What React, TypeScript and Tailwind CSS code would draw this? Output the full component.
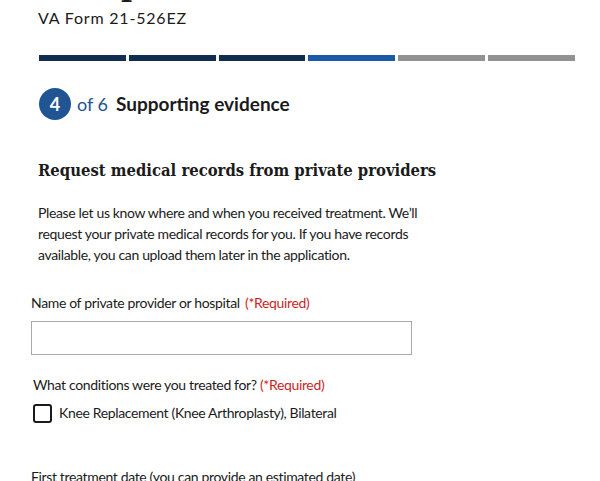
import React from 'react'

const steps = ['done', 'done', 'done', 'current', 'todo', 'todo']

const segmentColor: Record<string, string> = {
  done: 'bg-[#112e51]',
  current: 'bg-[#1b5aa6]',
  todo: 'bg-[#929292]',
}

const App: React.FC = () => {
  return (
    <div className="w-[600px] h-[481px] overflow-hidden bg-white text-[#1b1b1b] font-['Lato','Noto_Sans',sans-serif]">
      {/* page title, scrolled mostly out of view */}
      <div className="h-[4px] overflow-hidden pl-[51px]">
        <h1 className="font-['DejaVu_Serif',serif] font-bold text-[30px] leading-[36px] -mt-[32px] w-[300px]">
          compensation
        </h1>
      </div>

      <div className="pl-[38px] pt-[3px] text-[16px] leading-[22px] tracking-[0.8px]">VA Form 21-526EZ</div>

      <div className="flex gap-[3px] pl-[39px] pr-[25px] mt-[26px]">
        {steps.map((s, i) => (
          <div key={i} className={`flex-1 h-[6px] ${segmentColor[s]}`} />
        ))}
      </div>

      <div className="flex items-center pl-[39px] mt-[27px]">
        <div className="w-[32px] h-[32px] rounded-full bg-[#205493] text-white flex items-center justify-center text-[18px] font-bold">
          4
        </div>
        <span className="ml-[6px] text-[#205493] text-[18px]">of 6</span>
        <h2 className="ml-[8px] text-[19px] font-bold">Supporting evidence</h2>
      </div>

      <h3 className="pl-[38px] mt-[39px] font-['DejaVu_Serif_Condensed','Liberation_Serif',serif] font-bold text-[16.5px] leading-[24px]">
        Request medical records from private providers
      </h3>

      <p className="pl-[38px] mt-[19px] w-[440px] text-[14px] leading-[21px] tracking-[-0.35px]">
        Please let us know where and when you received treatment. We’ll request your private medical
        records for you. If you have records available, you can upload them later in the application.
      </p>

      <div className="pl-[31px] mt-[28px] text-[14px] tracking-[-0.35px]">
        <label className="block leading-[20px]">
          Name of private provider or hospital{' '}
          <span className="ml-[2px] text-[#cc1f1f]">(*Required)</span>
        </label>
        <input
          type="text"
          className="mt-[8px] block w-[381px] h-[34px] border border-[#a9a9a9] outline-none px-2"
        />
      </div>

      <fieldset className="pl-[33px] mt-[20px] text-[14px] tracking-[-0.35px]">
        <legend className="leading-[20px]">
          What conditions were you treated for?{' '}
          <span className="text-[#cc1f1f]">(*Required)</span>
        </legend>
        <label className="flex items-center mt-[8px] leading-[20px]">
          <span className="w-[19px] h-[19px] rounded-[3px] border-2 border-[#1b1b1b] bg-white" />
          <span className="ml-[7px]">Knee Replacement (Knee Arthroplasty), Bilateral</span>
        </label>
      </fieldset>

      <div className="pl-[31px] mt-[44px] text-[14px] leading-[20px] tracking-[-0.35px]">
        First treatment date (you can provide an estimated date)
      </div>
    </div>
  )
}

export default App
